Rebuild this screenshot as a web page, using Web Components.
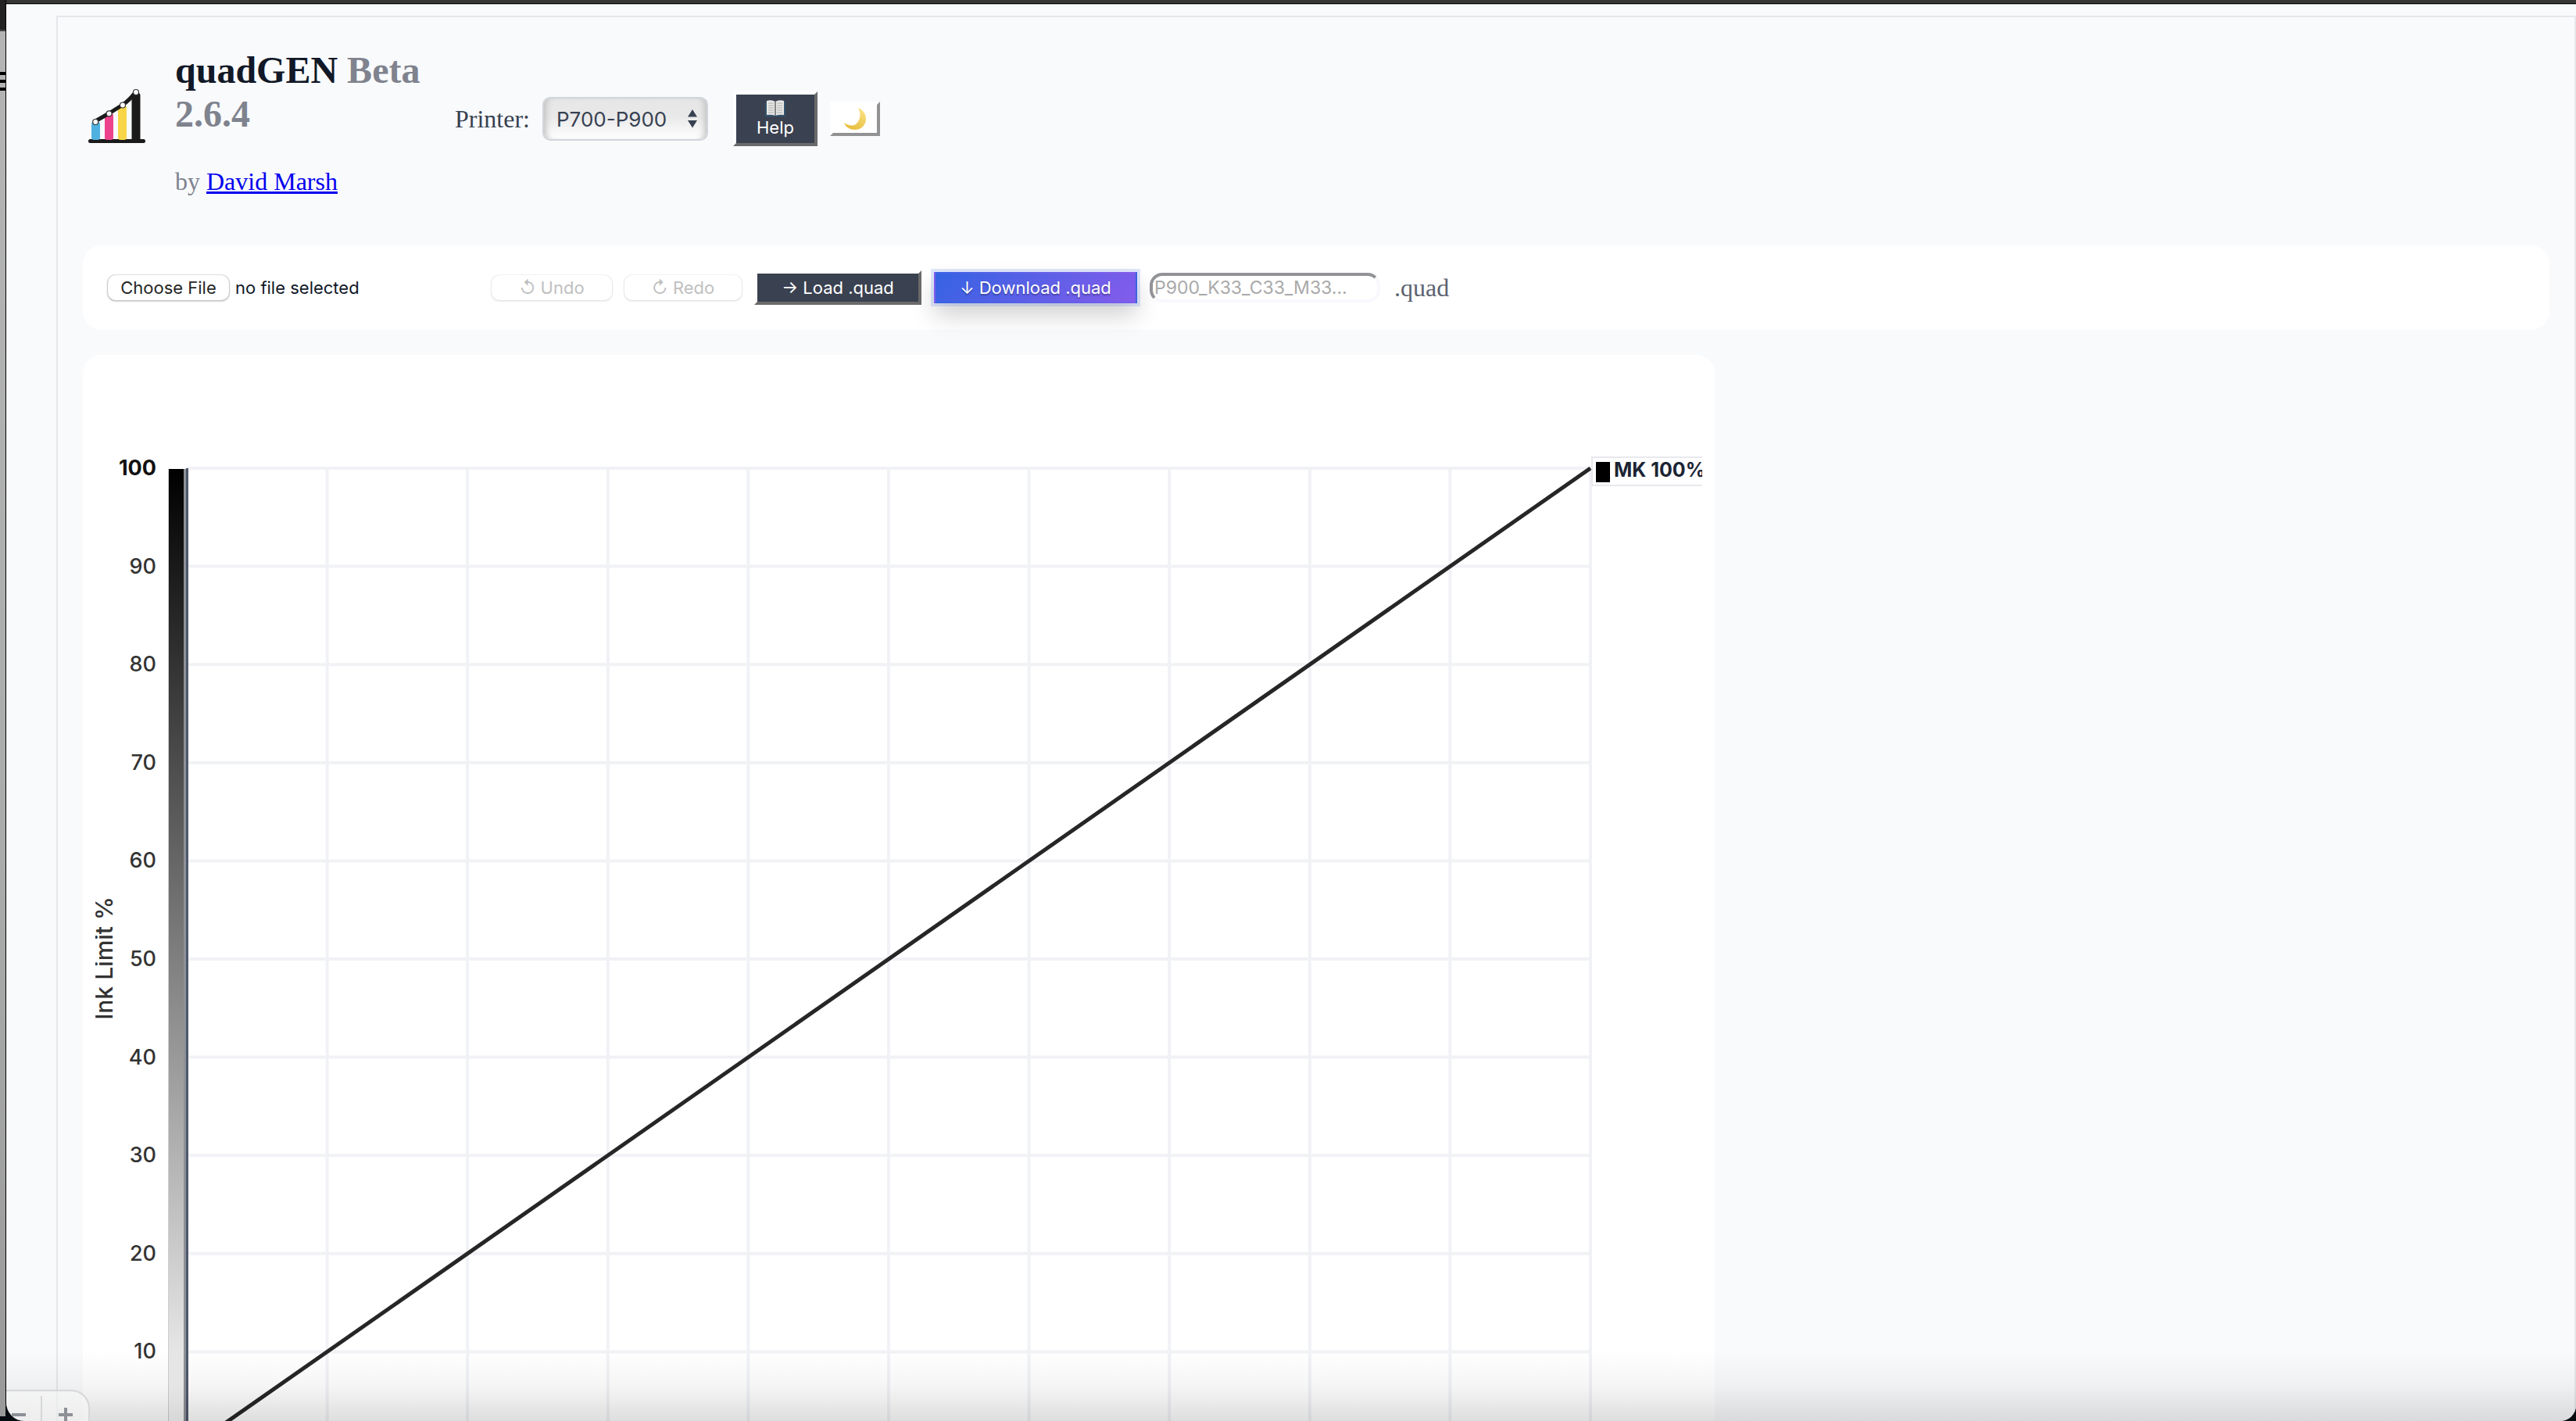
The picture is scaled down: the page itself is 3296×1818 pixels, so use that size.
<!DOCTYPE html>
<html lang="en">
<head>
<meta charset="utf-8">
<title>quadGEN</title>
<style>
html, body { margin: 0; height: 100%; overflow: hidden; }
body { font-family: "Liberation Serif", serif; font-size: 32px; color: #111827; }
</style>
</head>
<body>
<quad-desktop>
  <quad-frame>
    <quad-header></quad-header>
    <quad-toolbar></quad-toolbar>
    <quad-chart></quad-chart>
  </quad-frame>
  <quad-zoom slot="overlay"></quad-zoom>
</quad-desktop>

<script>
const define = (name, markup, setup) => customElements.define(name, class extends HTMLElement {
  constructor() {
    super();
    this.attachShadow({ mode: 'open' }).innerHTML = markup;
    if (setup) setup(this.shadowRoot);
  }
});

/* Desktop behind the application window */
define('quad-desktop', `
<style>
  :host { display: flex; position: relative; height: 100vh; overflow: hidden; background: #060b12; }
  .behind { width: 7px; height: calc(100% - 6px); background: linear-gradient(#222 0 38px, #444 38px 40px, #b4b4b4 40px, #aaacab 60%, #999 100%); display: flex; flex-direction: column; gap: 6px; padding-top: 92px; box-sizing: border-box; }
  .behind i { height: 4px; background: #000; }
  .window { flex: 1; min-width: 0; display: flex; flex-direction: column; overflow: hidden; background: #f9fafc; border-left: 1px solid #000; border-radius: 0 0 20px 24px; position: relative; }
  .bar { flex: none; height: 4px; background: #373734; border-bottom: 1px solid #000; box-shadow: 0 1px #b0b0b0; margin-bottom: 1px; position: relative; }
  .view { flex: 1; min-height: 0; overflow: hidden; padding: 14px 0 0 64px; }
  .shade { position: absolute; left: 0; right: 0; bottom: 0; height: 90px; pointer-events: none; background: linear-gradient(rgba(0,0,0,0), rgba(0,0,0,.04) 50%, rgba(0,0,0,.13)); }
</style>
<div class="behind"><i></i><i></i><i></i></div>
<div class="window">
  <div class="bar"></div>
  <div class="view"><slot></slot></div>
  <div class="shade"></div>
  <slot name="overlay"></slot>
</div>`);

define('quad-frame', `
<style>
  :host { display: flex; flex-direction: column; gap: 32px; border: 2px solid #e5e7eb; padding: 32px; min-height: 2000px; }
</style>
<slot></slot>`);

define('quad-header', `
<style>
  :host { display: flex; align-items: center; margin-bottom: 32px; font-size: 32px; }
  .logo { width: 80px; height: 80px; flex: none; }
  .brand { width: 324px; margin: 0 34px 0 38px; padding-top: 8px; }
  h1 { margin: 0; font-size: 48px; line-height: 56px; font-weight: 700; color: #111827; }
  h1 span, .by { color: #7f838e; }
  .by { margin: 40px 0 0; line-height: 36px; }
  a { color: #00e; text-decoration: underline; }
  label { color: #374151; margin-right: 16px; }
  .pick { position: relative; display: flex; margin-right: 32px; }
  select { appearance: none; margin: 0; width: 212px; height: 56px; padding: 0 16px; border: 2px solid #d1d5db; border-radius: 10px; color: #374151; font: 26px Inter, sans-serif;
    background: linear-gradient(#e6e6e6, #e9e9e9 45%, #fff); box-shadow: inset 8px 0 8px -6px #bbb, inset -8px 0 8px -6px #bbb; }
  .pick svg { position: absolute; right: 14px; top: 16px; pointer-events: none; }
  button { font: 22px/26px Inter, sans-serif; border: 4px solid; border-color: #fff #6b6b6b #6b6b6b #fff; padding: 0; display: flex; flex-direction: column; align-items: center; justify-content: center; }
  .help { width: 108px; height: 70px; background: #3a4150; color: #fff; margin-right: 16px; }
  .moon { width: 64px; height: 44px; background: #fff; border-color: #fff #919294 #919294 #fff; }
</style>
<svg class="logo" viewBox="0 6 80 80" aria-hidden="true">
  <rect x="7" y="72" width="73" height="5" rx="2.500" fill="#1a1a1a"/>
  <rect x="11" y="50" width="11" height="23" rx="3" fill="#4fb1df"/>
  <rect x="28" y="39" width="11" height="34" rx="3" fill="#ec428c"/>
  <rect x="45" y="29" width="11" height="44" rx="3" fill="#f8d648"/>
  <rect x="62.500" y="13" width="11" height="61" rx="3" fill="#1a1a1a"/>
  <path d="M16 49 L33.500 39 L51 28 Q60 22 68 11" fill="none" stroke="#1a1a1a" stroke-width="5"/>
  <g fill="#fff" stroke="#333" stroke-width="1.200"><circle cx="16.200" cy="50" r="3.500"/><circle cx="33.600" cy="39.300" r="3.500"/><circle cx="51" cy="28.500" r="3.500"/><circle cx="68" cy="12" r="3.500"/></g>
</svg>
<div class="brand">
  <h1>quadGEN <span>Beta 2.6.4</span></h1>
  <p class="by">by <a href="#">David Marsh</a></p>
</div>
<label for="printer">Printer:</label>
<div class="pick">
  <select id="printer"><option>P700-P900</option></select>
  <svg width="12" height="24" viewBox="0 0 12 24"><path d="M0 9.500 6 0l6 9.500zM0 14h12L6 23.500z" fill="#374151"/></svg>
</div>
<button class="help" type="button">
  <svg width="26" height="22" viewBox="0 0 26 22" aria-hidden="true"><path d="M0 2h26v19H0z" fill="#34556e"/><path d="M2 1q6-2 11 1 5-3 11-1v18q-6-1-11 1-5-2-11-1z" fill="#e9e9e7"/><path d="M13 2v18" stroke="#666" stroke-width="1.500"/><path d="M4 4h7M4 7h7M4 10h7M4 13h7M4 16h7M15 4h7M15 7h7M15 10h7M15 13h7M15 16h7" stroke="#aaa"/></svg>
  Help
</button>
<button class="moon" type="button" aria-label="Toggle dark mode">
  <svg width="28" height="28" viewBox="0 0 28 28"><defs><linearGradient id="m" x1="1" y1="0" x2=".4" y2="1"><stop stop-color="#fbe58a"/><stop offset="1" stop-color="#e9be3e"/></linearGradient></defs><path d="M18 0C25 3 28 8 28 14 28 22 22 28 14 28 8 28 2 25 0 19c5 4 12 5 16 1C21 15 22 7 18 0z" fill="url(#m)"/></svg>
</button>`);

define('quad-toolbar', `
<style>
  :host { display: flex; align-items: center; height: 108px; box-sizing: border-box; padding: 0 32px; gap: 16px; background: #fff; border-radius: 24px; font: 22px/26px Inter, sans-serif; }
  .file { display: flex; align-items: center; gap: 8px; width: 475px; position: relative; }
  .file input { position: absolute; width: 1px; height: 1px; opacity: 0; }
  .push, button { box-sizing: border-box; display: flex; align-items: center; justify-content: center; padding: 0; font: inherit; white-space: pre; }
  .push { height: 32px; border: 0; border-radius: 10px; background: #fff; color: #262626; box-shadow: 0 0 1px 1px rgba(0,0,0,.1), 0 1px 2px 1px rgba(0,0,0,.16); }
  .choose { width: 155px; }
  .push:disabled { color: #bfbfbf; box-shadow: 0 0 1px 1px rgba(0,0,0,.04), 0 1px 2px 1px rgba(0,0,0,.07); }
  .undo { width: 154px; } .redo { width: 150px; }
  .load { width: 214px; height: 44px; border: 4px solid; border-color: #fff #6b6b6b #6b6b6b #fff; background: #3a4150; color: #fff; }
  .down { width: 260px; height: 40px; border: 2px solid transparent; color: #fff; background: linear-gradient(135deg, #3563e3, #845ceb); box-shadow: 0 0 0 4px rgba(53,99,227,.16), 0 16px 30px rgba(0,0,0,.18); text-shadow: 0 2px 2px rgba(0,0,0,.3); }
  .name { box-sizing: border-box; width: 295px; height: 38px; border: 4px solid; border-color: #929396 #f8f9fe #f8f9fe #929396; border-radius: 16px; padding: 0 2px; background: #fff; font: 23px Inter, sans-serif; }
  .name::placeholder { color: #a9a9a9; opacity: 1; }
  .ext { font: 32px/36px "Liberation Serif", serif; color: #5b6370; margin-left: 2px; }
</style>
<div class="file">
  <input type="file" id="file"><label class="push choose" for="file">Choose File</label><span>no file selected</span>
</div>
<button class="push undo" type="button" disabled>↺ Undo</button>
<button class="push redo" type="button" disabled>↻ Redo</button>
<button class="load" type="button">→ Load .quad</button>
<button class="down" type="button">↓ Download .quad</button>
<input class="name" id="name" type="text" aria-label="File name" placeholder="P900_K33_C33_M33...">
<label class="ext" for="name">.quad</label>`);

define('quad-chart', `
<style>
  :host { display: grid; grid-template-columns: 2fr 1fr; gap: 24px; }
  .card { background: #fff; border-radius: 24px; padding: 16px; }
  svg { display: block; width: 100%; height: auto; }
  text { font-family: Inter, sans-serif; font-size: 27px; font-weight: 500; fill: #333; }
  .full { font-weight: 700; fill: #111; }
  .key { font-size: 25px; font-weight: 700; fill: #1c2433; }
  .axis { font-size: 30px; }
</style>
<div class="card">
<svg viewBox="0 0 2056 1480" role="img" aria-label="Ink limit chart">
  <defs><linearGradient id="ink" x1="0" y1="0" x2="0" y2="1"><stop stop-color="#000"/><stop offset="1" stop-color="#fff"/></linearGradient></defs>
  <g id="grid" stroke="#f1f2f5" stroke-width="4"></g>
  <rect x="94" y="130" width="19" height="1255" fill="url(#ink)"/>
  <path d="M93.500 130V1385" stroke="#9a9da5" stroke-opacity=".5"/>
  <rect x="113" y="130" width="3" height="1255" fill="#8f9199"/>
  <rect x="116" y="129" width="3" height="1256" fill="#4f586b"/>
  <path d="M117 1385 1913 129" stroke="#262626" stroke-width="5"/>
  <rect x="1915" y="115" width="170" height="36" fill="#fff" stroke="#e8e9ee" stroke-width="2"/>
  <rect x="1920" y="121" width="18" height="26" fill="#000"/>
  <text class="key" x="1943" y="140">MK 100%</text>
  <text class="axis" x="22" y="756" transform="rotate(-90 22 756)" text-anchor="middle">Ink Limit %</text>
</svg>
</div>`, root => {
  const ns = 'http://www.w3.org/2000/svg';
  const svg = root.querySelector('svg'), grid = root.querySelector('#grid');
  const add = (parent, tag, attrs, text) => {
    const el = document.createElementNS(ns, tag);
    for (const k in attrs) el.setAttribute(k, attrs[k]);
    if (text) el.textContent = text;
    parent.append(el);
  };
  for (let i = 0; i <= 10; i++) {
    const y = 129 + i * 125.6, x = 117 + i * 179.6;
    add(grid, 'path', { d: `M117 ${y}H1913M${x} 129V1385` });
    add(svg, 'text', { x: 78, y: y + 9, 'text-anchor': 'end', class: i ? '' : 'full' }, String(100 - i * 10));
  }
});

/* Page zoom control in the corner of the window */
define('quad-zoom', `
<style>
  :host { position: absolute; left: -20px; bottom: -30px; display: flex; box-sizing: border-box; width: 127px; height: 70px; border: 2px solid #d6d7d9; border-radius: 24px; background: rgba(250,250,250,.6); }
  button { box-sizing: border-box; border: 0; background: none; padding: 0; display: flex; align-items: flex-start; }
  .out { width: 62px; padding-right: 19px; justify-content: flex-end; }
  .in { flex: 1; border-left: 2px solid #d6d7d9; justify-content: center; margin-top: 6px; }
  .out svg { margin-top: 21px; }
  .in svg { margin-top: 15px; }
</style>
<button class="out" type="button" aria-label="Zoom out"><svg width="18" height="18"><path d="M0 9h18" stroke="#8d9096" stroke-width="4"/></svg></button>
<button class="in" type="button" aria-label="Zoom in"><svg width="18" height="18"><path d="M0 9h18M9 0v18" stroke="#8d9096" stroke-width="4"/></svg></button>`);
</script>
</body>
</html>
